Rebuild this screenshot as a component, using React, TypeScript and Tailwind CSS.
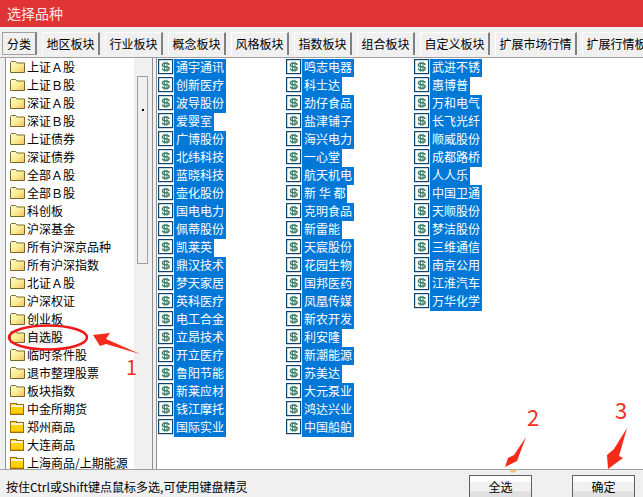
const tabs = [
  { label: "地区板块", w: "w-[58px]" },
  { label: "行业板块", w: "w-[58px]" },
  { label: "概念板块", w: "w-[58px]" },
  { label: "风格板块", w: "w-[58px]" },
  { label: "指数板块", w: "w-[58px]" },
  { label: "组合板块", w: "w-[58px]" },
  { label: "自定义板块", w: "w-[70px]" },
  { label: "扩展市场行情", w: "w-[82px]" },
  { label: "扩展行情板块", w: "w-[82px]" },
];

const folders = [
  "上证Ａ股", "上证Ｂ股", "深证Ａ股", "深证Ｂ股", "上证债券", "深证债券", "全部Ａ股", "全部Ｂ股",
  "科创板", "沪深基金", "所有沪深京品种", "所有沪深指数", "北证Ａ股", "沪深权证", "创业板", "自选股",
  "临时条件股", "退市整理股票", "板块指数",
];
const futures = ["中金所期货", "郑州商品", "大连商品", "上海商品/上期能源"];

const stocks = [
  "通宇通讯", "创新医疗", "波导股份", "爱婴室", "广博股份", "北纬科技", "蓝晓科技", "壶化股份", "国电电力", "佩蒂股份", "凯莱英",
  "鼎汉技术", "梦天家居", "英科医疗", "电工合金", "立昂技术", "开立医疗", "鲁阳节能", "新莱应材", "钱江摩托", "国际实业",
  "鸣志电器", "科士达", "劲仔食品", "盐津铺子", "海兴电力", "一心堂", "航天机电", "新 华 都", "克明食品", "新雷能", "天宸股份",
  "花园生物", "国邦医药", "凤凰传媒", "新农开发", "利安隆", "新潮能源", "苏美达", "大元泵业", "鸿达兴业", "中国船舶",
  "武进不锈", "惠博普", "万和电气", "长飞光纤", "顺威股份", "成都路桥", "人人乐", "中国卫通", "天顺股份", "梦洁股份",
  "三维通信", "南京公用", "江淮汽车", "万华化学",
];

function FolderIcon({ solid }: { solid?: boolean }) {
  if (solid) {
    return (
      <svg width="15" height="14" viewBox="0 0 15 14" className="shrink-0" shapeRendering="crispEdges">
        <path d="M0.5 1.5h6v1h7v10h-13z" fill="#ffd200" stroke="#a06a00" />
        <rect x="1" y="3" width="12" height="2" fill="#fff6d0" />
        <rect x="1" y="11" width="12" height="1" fill="#e8a800" />
      </svg>
    );
  }
  return (
    <svg width="16" height="14" viewBox="0 0 16 14" className="shrink-0">
      <defs>
        <linearGradient id="fold" x1="0" y1="0" x2="1" y2="1">
          <stop offset="0" stopColor="#fffdc8" />
          <stop offset="0.55" stopColor="#faeb90" />
          <stop offset="1" stopColor="#f4b868" />
        </linearGradient>
      </defs>
      <path d="M0.5 2.5l1-1h4l1.5 1.5h7.5v9.5h-14z" fill="url(#fold)" stroke="#7a6a28" />
    </svg>
  );
}

function StockIcon() {
  return (
    <svg width="16" height="16" viewBox="0 0 16 16" className="shrink-0">
      <rect x="0.6" y="0.6" width="14" height="14" fill="#fff" stroke="#0f4468" strokeWidth="1.2" />
      <path
        d="M11.2 6C11.2 4.8 10 4.2 8.5 4.2H7C5.5 4.2 4.4 4.9 4.4 6S5.5 7.7 7 7.7H8.5C10 7.7 11.2 8.4 11.2 9.5S10 11.3 8.5 11.3H7C5.5 11.3 4.4 10.7 4.4 9.5"
        fill="none"
        stroke="#3f7d68"
        strokeWidth="1.4"
      />
      <path d="M6.6 2.8V12.8M9 2.8V12.8" fill="none" stroke="#3f7d68" strokeWidth="1" />
    </svg>
  );
}

function Annotations() {
  return (
    <>
      <svg width="643" height="497" viewBox="0 0 643 497" className="absolute left-0 top-0 pointer-events-none">
        <ellipse cx="48" cy="337.5" rx="39" ry="12" fill="none" stroke="#f01818" strokeWidth="2.5" />
        <path d="M93 335L110 333L106 339L140 354L106 344L100 346z" fill="#f52a1a" />
        <path d="M505 467L508 458L514 455L526 437L517 461z" fill="#f52a1a" />
        <path d="M608 469L607 455L614 449L627 428L619 456L623 458z" fill="#f52a1a" />
        <ellipse cx="513" cy="471" rx="3" ry="1.5" fill="#f5c070" />
      </svg>
      <span className="absolute left-[126px] top-[353px] text-[20px] leading-[28px] text-[#f03020]">1</span>
      <span className="absolute left-[527px] top-[402px] text-[22px] leading-[28px] text-[#f03020]">2</span>
      <span className="absolute left-[615px] top-[395px] text-[22px] leading-[28px] text-[#f03020]">3</span>
    </>
  );
}

export default function App() {
  return (
    <div className="relative flex h-[497px] w-[643px] flex-col overflow-hidden bg-[#f0f0f0] text-[12px] leading-[16px] text-black [font-family:'Noto_Sans_CJK_SC','Liberation_Sans',sans-serif]">
      <div className="flex h-[27px] shrink-0 items-center bg-[#e03336] pb-[2px] pl-[7px] text-[14px] text-[#fde8e8]">选择品种</div>

      {/* tabs */}
      <div className="flex h-[30px] shrink-0 gap-[5px] overflow-hidden pl-[2px] pt-[5px]">
        <div className="flex h-[23px] w-[35px] shrink-0 items-center justify-center border-b border-l border-r-2 border-t border-[#a0a0a0] border-r-[#808080] bg-[#f0f0f0]">
          分类
        </div>
        {tabs.map((t) => (
          <div
            key={t.label}
            className={`flex h-[23px] shrink-0 items-center justify-center border-r-2 border-t border-l border-[#fff] border-r-[#808080] ${t.w}`}
          >
            {t.label}
          </div>
        ))}
      </div>

      {/* panels */}
      <div className="flex h-[413px] shrink-0 gap-[3px] border-b border-t border-[#a0a0a0] pl-[5px]">
        <div className="flex w-[148px] shrink-0 border-l border-r border-[#909090] bg-white">
          <div className="flex-1 overflow-hidden pl-[4px]">
            {folders.map((f) => (
              <div key={f} className="flex h-[18px] items-center gap-[1px] whitespace-nowrap">
                <FolderIcon />
                <span className={f === "自选股" ? "bg-[#f0f0f0]" : ""}>{f}</span>
              </div>
            ))}
            {futures.map((f) => (
              <div key={f} className="flex h-[18px] items-center gap-[2px] whitespace-nowrap">
                <FolderIcon solid />
                <span>{f}</span>
              </div>
            ))}
          </div>
          <div className="w-[18px] shrink-0 bg-[#f0f0f0] pl-[3px] pt-[18px]">
            <div className="flex h-[188px] w-[11px] justify-center border border-[#a0a0a0] bg-[#f0f0f0] pt-[32px]">
              <div className="h-[2px] w-[2px] bg-black" />
            </div>
          </div>
        </div>

        <div className="grid flex-1 grid-flow-col grid-cols-[128px_128px_128px] grid-rows-[repeat(21,18px)] justify-start border-l border-[#909090] bg-white pl-[1px] pt-[1px]">
          {stocks.map((s) => (
            <div key={s} className="flex h-[18px] items-start">
              <StockIcon />
              <span className="h-[18px] whitespace-pre bg-[#0078d7] px-[2px] text-white">{s}</span>
            </div>
          ))}
        </div>
      </div>

      {/* bottom bar */}
      <div className="flex flex-1 items-center pl-[6px]">
        <span className="flex-1 pt-[6px]">按住Ctrl或Shift键点鼠标多选,可使用键盘精灵</span>
        <button className="mr-[40px] mt-[5px] h-[23px] w-[63px] border border-[#606060] bg-[linear-gradient(#ffffff_25%,#f0f0f0_30%,#f0f0f0_70%,#e0e0e0_75%)]">
          全选
        </button>
        <button className="mr-[8px] mt-[5px] h-[23px] w-[63px] border border-[#606060] bg-[linear-gradient(#ffffff_25%,#f0f0f0_30%,#f0f0f0_70%,#e0e0e0_75%)]">
          确定
        </button>
      </div>

      <Annotations />
    </div>
  );
}
